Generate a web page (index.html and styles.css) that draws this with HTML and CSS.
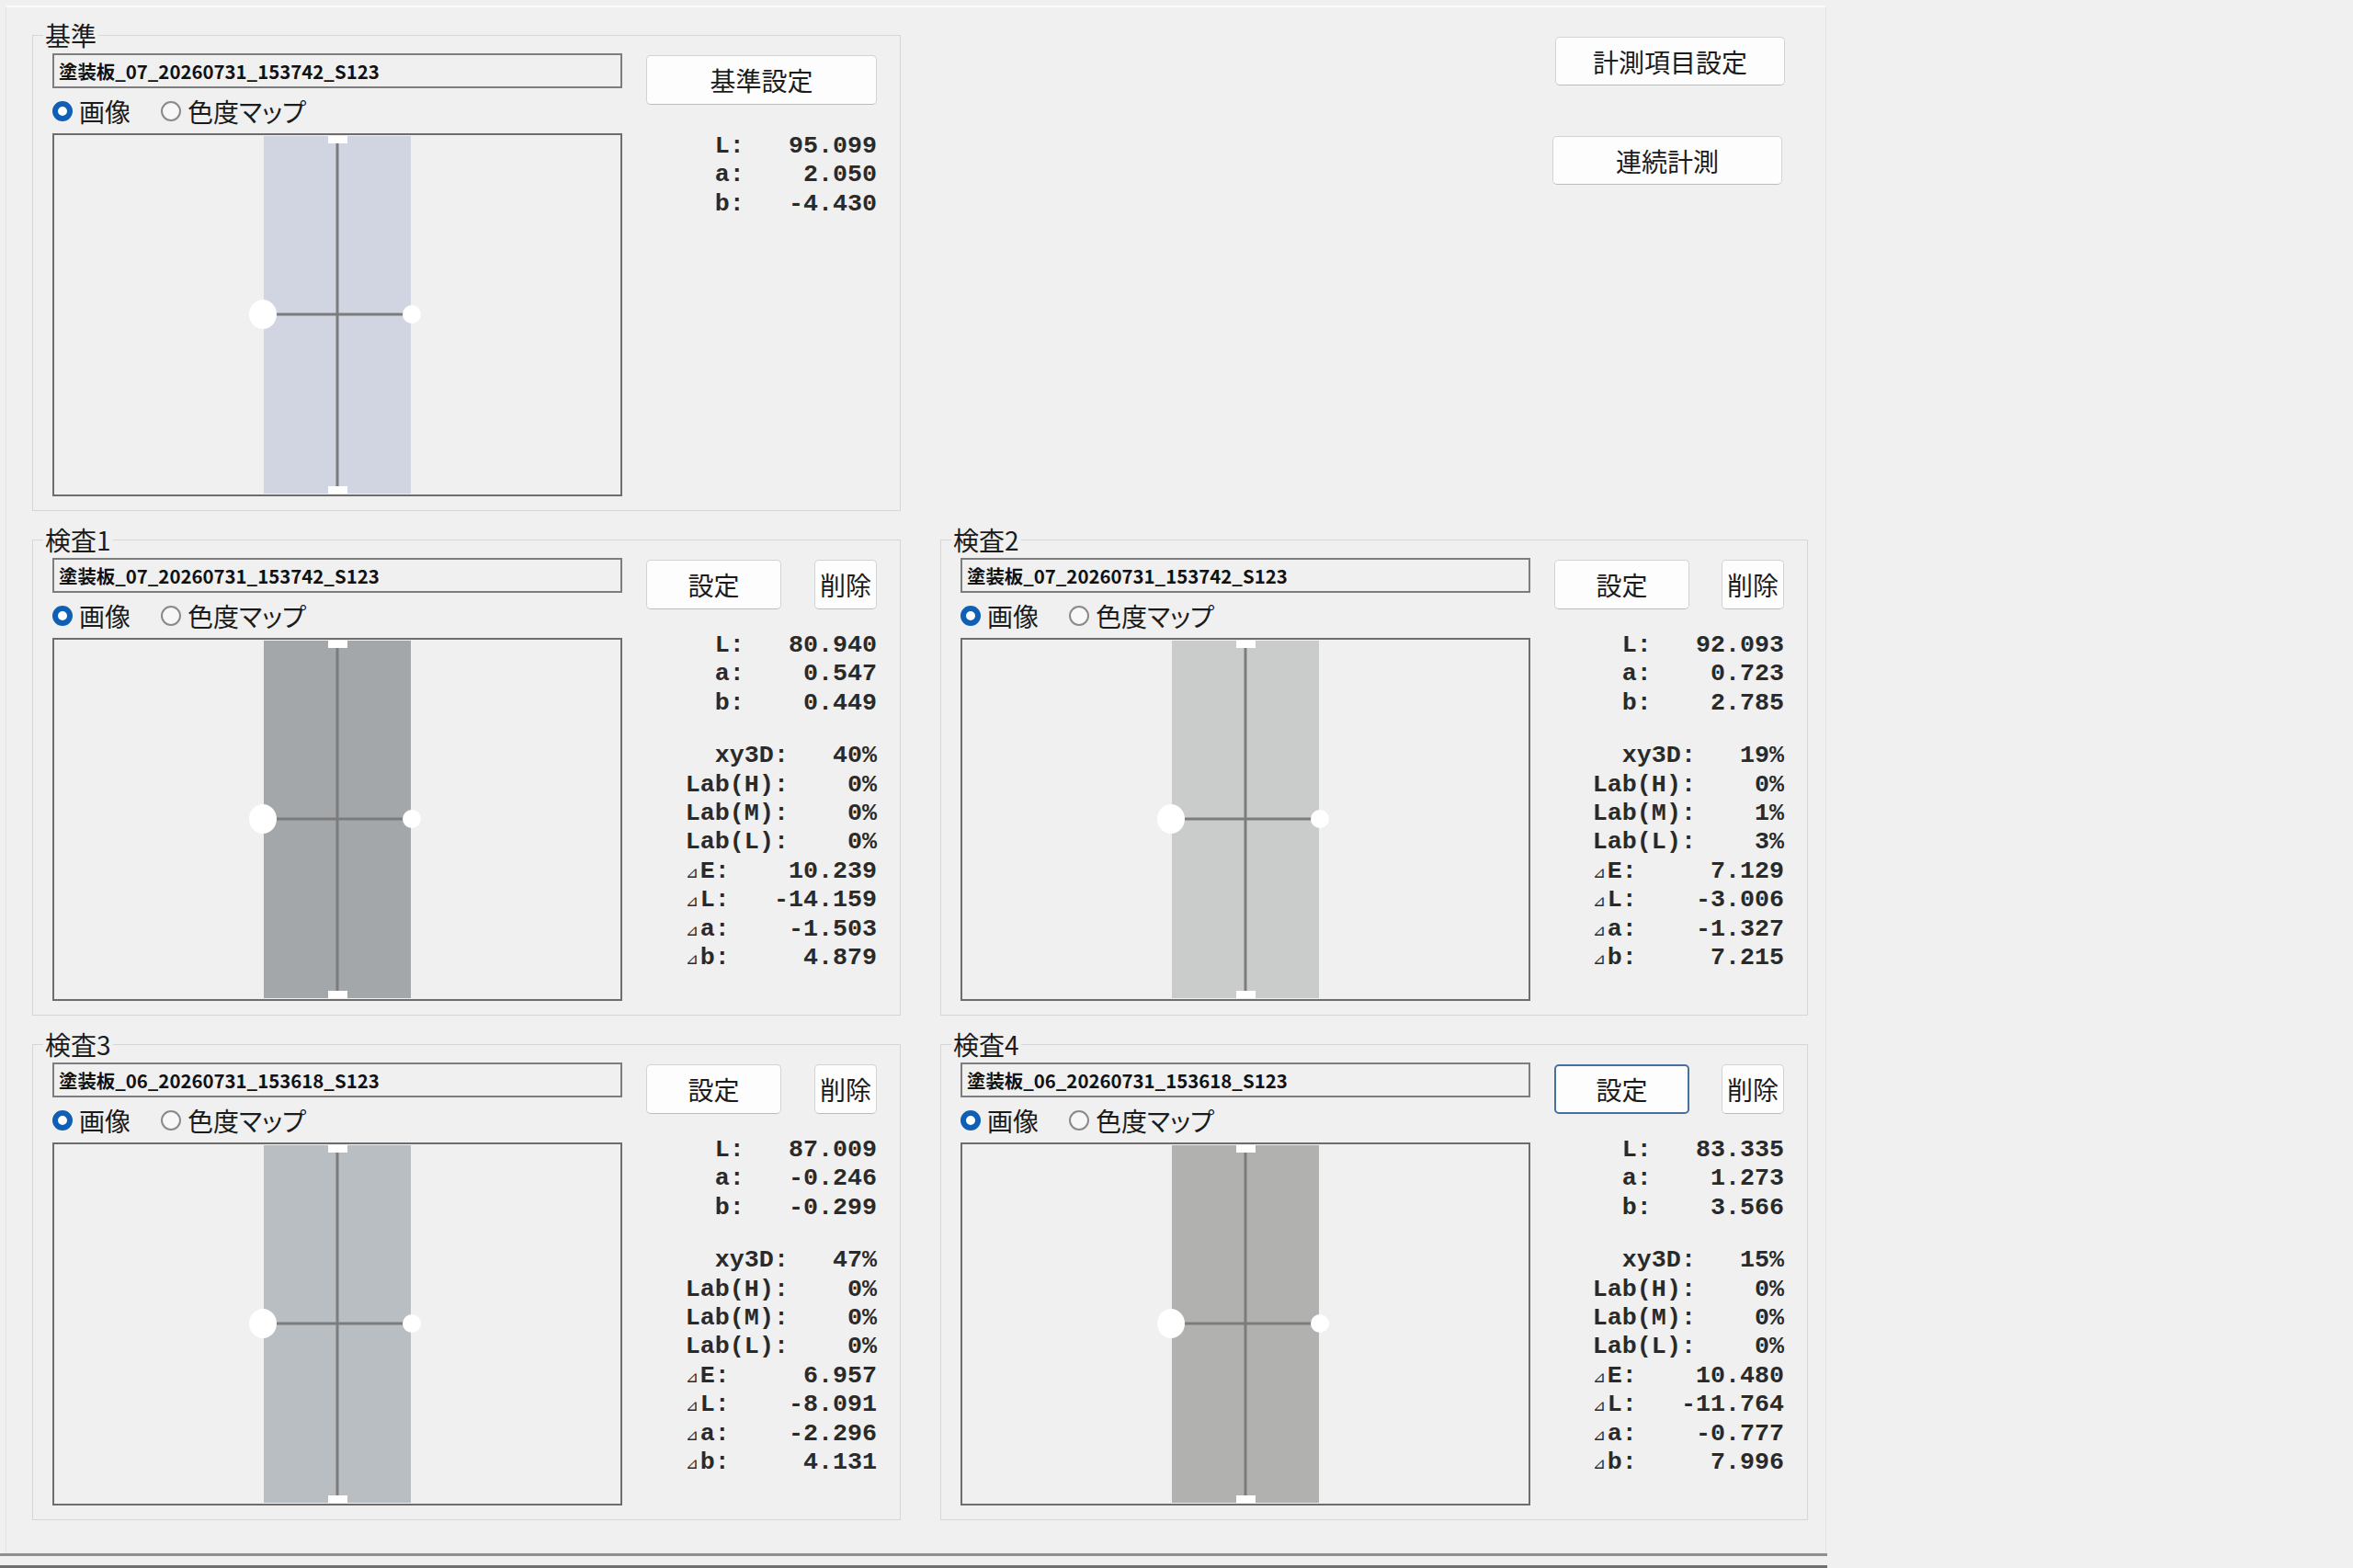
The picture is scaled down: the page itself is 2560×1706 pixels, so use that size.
FILE: index.html
```html
<!DOCTYPE html>
<html lang="ja">
<head>
    <meta charset="UTF-8">
    <title>色差計測</title>
    <link rel="stylesheet" href="styles.css">
</head>
<body>
<div class="window">
    <div class="panel">

        <!-- 基準 -->
        <fieldset class="group base">
            <legend>基準</legend>
            <div class="body">
                <div class="view">
                    <div class="file">塗装板_07_20260731_153742_S123</div>
                    <div class="radios">
                        <label class="radio"><input type="radio" name="m0" checked><span>画像</span></label>
                        <label class="radio"><input type="radio" name="m0"><span>色度マップ</span></label>
                    </div>
                    <div class="preview">
                        <svg viewBox="0 0 616 391">
                            <rect x="228" y="1" width="160" height="389" fill="#d1d5e2"/>
                            <line class="cross" x1="308" y1="1" x2="308" y2="390"/>
                            <line class="cross" x1="240" y1="195" x2="380" y2="195"/>
                            <rect class="grip" x="298" y="1" width="21" height="8"/>
                            <rect class="grip" x="298" y="382" width="21" height="8"/>
                            <ellipse class="grip" cx="227" cy="195" rx="15" ry="16"/>
                            <circle class="grip" cx="389" cy="195" r="10"/>
                        </svg>
                    </div>
                </div>
                <div class="side">
                    <div class="btns">
                        <button class="btn wide">基準設定</button>
                    </div>
                    <div class="vals">
                        <div class="row"><span class="ind">L:</span><span>95.099</span></div>
                        <div class="row"><span class="ind">a:</span><span>2.050</span></div>
                        <div class="row"><span class="ind">b:</span><span>-4.430</span></div>
                    </div>
                </div>
            </div>
        </fieldset>

        <div class="actions">
            <button class="btn">計測項目設定</button>
            <button class="btn shift">連続計測</button>
        </div>

        <!-- 検査1 -->
        <fieldset class="group">
            <legend>検査1</legend>
            <div class="body">
                <div class="view">
                    <div class="file">塗装板_07_20260731_153742_S123</div>
                    <div class="radios">
                        <label class="radio"><input type="radio" name="m1" checked><span>画像</span></label>
                        <label class="radio"><input type="radio" name="m1"><span>色度マップ</span></label>
                    </div>
                    <div class="preview">
                        <svg viewBox="0 0 616 391">
                            <rect x="228" y="1" width="160" height="389" fill="#a4a7aa"/>
                            <line class="cross" x1="308" y1="1" x2="308" y2="390"/>
                            <line class="cross" x1="240" y1="195" x2="380" y2="195"/>
                            <rect class="grip" x="298" y="1" width="21" height="8"/>
                            <rect class="grip" x="298" y="382" width="21" height="8"/>
                            <ellipse class="grip" cx="227" cy="195" rx="15" ry="16"/>
                            <circle class="grip" cx="389" cy="195" r="10"/>
                        </svg>
                    </div>
                </div>
                <div class="side">
                    <div class="btns">
                        <button class="btn set">設定</button>
                        <button class="btn del">削除</button>
                    </div>
                    <div class="vals">
                        <div class="row"><span class="ind">L:</span><span>80.940</span></div>
                        <div class="row"><span class="ind">a:</span><span>0.547</span></div>
                        <div class="row"><span class="ind">b:</span><span>0.449</span></div>
                    </div>
                    <div class="vals res">
                        <div class="row"><span class="ind">xy3D:</span><span>40%</span></div>
                        <div class="row"><span>Lab(H):</span><span>0%</span></div>
                        <div class="row"><span>Lab(M):</span><span>0%</span></div>
                        <div class="row"><span>Lab(L):</span><span>0%</span></div>
                        <div class="row"><span><span class="tri">⊿</span>E:</span><span>10.239</span></div>
                        <div class="row"><span><span class="tri">⊿</span>L:</span><span>-14.159</span></div>
                        <div class="row"><span><span class="tri">⊿</span>a:</span><span>-1.503</span></div>
                        <div class="row"><span><span class="tri">⊿</span>b:</span><span>4.879</span></div>
                    </div>
                </div>
            </div>
        </fieldset>

        <!-- 検査2 -->
        <fieldset class="group">
            <legend>検査2</legend>
            <div class="body">
                <div class="view">
                    <div class="file">塗装板_07_20260731_153742_S123</div>
                    <div class="radios">
                        <label class="radio"><input type="radio" name="m2" checked><span>画像</span></label>
                        <label class="radio"><input type="radio" name="m2"><span>色度マップ</span></label>
                    </div>
                    <div class="preview">
                        <svg viewBox="0 0 616 391">
                            <rect x="228" y="1" width="160" height="389" fill="#cacccb"/>
                            <line class="cross" x1="308" y1="1" x2="308" y2="390"/>
                            <line class="cross" x1="240" y1="195" x2="380" y2="195"/>
                            <rect class="grip" x="298" y="1" width="21" height="8"/>
                            <rect class="grip" x="298" y="382" width="21" height="8"/>
                            <ellipse class="grip" cx="227" cy="195" rx="15" ry="16"/>
                            <circle class="grip" cx="389" cy="195" r="10"/>
                        </svg>
                    </div>
                </div>
                <div class="side">
                    <div class="btns">
                        <button class="btn set">設定</button>
                        <button class="btn del">削除</button>
                    </div>
                    <div class="vals">
                        <div class="row"><span class="ind">L:</span><span>92.093</span></div>
                        <div class="row"><span class="ind">a:</span><span>0.723</span></div>
                        <div class="row"><span class="ind">b:</span><span>2.785</span></div>
                    </div>
                    <div class="vals res">
                        <div class="row"><span class="ind">xy3D:</span><span>19%</span></div>
                        <div class="row"><span>Lab(H):</span><span>0%</span></div>
                        <div class="row"><span>Lab(M):</span><span>1%</span></div>
                        <div class="row"><span>Lab(L):</span><span>3%</span></div>
                        <div class="row"><span><span class="tri">⊿</span>E:</span><span>7.129</span></div>
                        <div class="row"><span><span class="tri">⊿</span>L:</span><span>-3.006</span></div>
                        <div class="row"><span><span class="tri">⊿</span>a:</span><span>-1.327</span></div>
                        <div class="row"><span><span class="tri">⊿</span>b:</span><span>7.215</span></div>
                    </div>
                </div>
            </div>
        </fieldset>

        <!-- 検査3 -->
        <fieldset class="group">
            <legend>検査3</legend>
            <div class="body">
                <div class="view">
                    <div class="file">塗装板_06_20260731_153618_S123</div>
                    <div class="radios">
                        <label class="radio"><input type="radio" name="m3" checked><span>画像</span></label>
                        <label class="radio"><input type="radio" name="m3"><span>色度マップ</span></label>
                    </div>
                    <div class="preview">
                        <svg viewBox="0 0 616 391">
                            <rect x="228" y="1" width="160" height="389" fill="#b9bec2"/>
                            <line class="cross" x1="308" y1="1" x2="308" y2="390"/>
                            <line class="cross" x1="240" y1="195" x2="380" y2="195"/>
                            <rect class="grip" x="298" y="1" width="21" height="8"/>
                            <rect class="grip" x="298" y="382" width="21" height="8"/>
                            <ellipse class="grip" cx="227" cy="195" rx="15" ry="16"/>
                            <circle class="grip" cx="389" cy="195" r="10"/>
                        </svg>
                    </div>
                </div>
                <div class="side">
                    <div class="btns">
                        <button class="btn set">設定</button>
                        <button class="btn del">削除</button>
                    </div>
                    <div class="vals">
                        <div class="row"><span class="ind">L:</span><span>87.009</span></div>
                        <div class="row"><span class="ind">a:</span><span>-0.246</span></div>
                        <div class="row"><span class="ind">b:</span><span>-0.299</span></div>
                    </div>
                    <div class="vals res">
                        <div class="row"><span class="ind">xy3D:</span><span>47%</span></div>
                        <div class="row"><span>Lab(H):</span><span>0%</span></div>
                        <div class="row"><span>Lab(M):</span><span>0%</span></div>
                        <div class="row"><span>Lab(L):</span><span>0%</span></div>
                        <div class="row"><span><span class="tri">⊿</span>E:</span><span>6.957</span></div>
                        <div class="row"><span><span class="tri">⊿</span>L:</span><span>-8.091</span></div>
                        <div class="row"><span><span class="tri">⊿</span>a:</span><span>-2.296</span></div>
                        <div class="row"><span><span class="tri">⊿</span>b:</span><span>4.131</span></div>
                    </div>
                </div>
            </div>
        </fieldset>

        <!-- 検査4 -->
        <fieldset class="group">
            <legend>検査4</legend>
            <div class="body">
                <div class="view">
                    <div class="file">塗装板_06_20260731_153618_S123</div>
                    <div class="radios">
                        <label class="radio"><input type="radio" name="m4" checked><span>画像</span></label>
                        <label class="radio"><input type="radio" name="m4"><span>色度マップ</span></label>
                    </div>
                    <div class="preview">
                        <svg viewBox="0 0 616 391">
                            <rect x="228" y="1" width="160" height="389" fill="#b1b2b0"/>
                            <line class="cross" x1="308" y1="1" x2="308" y2="390"/>
                            <line class="cross" x1="240" y1="195" x2="380" y2="195"/>
                            <rect class="grip" x="298" y="1" width="21" height="8"/>
                            <rect class="grip" x="298" y="382" width="21" height="8"/>
                            <ellipse class="grip" cx="227" cy="195" rx="15" ry="16"/>
                            <circle class="grip" cx="389" cy="195" r="10"/>
                        </svg>
                    </div>
                </div>
                <div class="side">
                    <div class="btns">
                        <button class="btn set focus">設定</button>
                        <button class="btn del">削除</button>
                    </div>
                    <div class="vals">
                        <div class="row"><span class="ind">L:</span><span>83.335</span></div>
                        <div class="row"><span class="ind">a:</span><span>1.273</span></div>
                        <div class="row"><span class="ind">b:</span><span>3.566</span></div>
                    </div>
                    <div class="vals res">
                        <div class="row"><span class="ind">xy3D:</span><span>15%</span></div>
                        <div class="row"><span>Lab(H):</span><span>0%</span></div>
                        <div class="row"><span>Lab(M):</span><span>0%</span></div>
                        <div class="row"><span>Lab(L):</span><span>0%</span></div>
                        <div class="row"><span><span class="tri">⊿</span>E:</span><span>10.480</span></div>
                        <div class="row"><span><span class="tri">⊿</span>L:</span><span>-11.764</span></div>
                        <div class="row"><span><span class="tri">⊿</span>a:</span><span>-0.777</span></div>
                        <div class="row"><span><span class="tri">⊿</span>b:</span><span>7.996</span></div>
                    </div>
                </div>
            </div>
        </fieldset>

    </div>
    <div class="statusbar"></div>
</div>
</body>
</html>
```

FILE: styles.css
```css
* {
    box-sizing: border-box;
}
body {
    margin: 0;
    background: #f0f0f0;
    font-family: "Noto Sans CJK JP", sans-serif;
    color: #1b1b1b;
}
.window {
    width: 1988px;
    height: 1706px;
    display: flex;
    flex-direction: column;
}
.panel {
    flex: 1;
    margin: 6px 1px 0 6px;
    border-top: 2px solid #fbfbfb;
    border-left: 1px solid #e3e3e3;
    border-right: 1px solid #e3e3e3;
    padding: 15px 0 0 28px;
    display: grid;
    grid-template-columns: 945px 944px;
    column-gap: 43px;
    row-gap: 16px;
    align-content: start;
    align-items: start;
}
.statusbar {
    height: 16px;
    border-top: 3px solid #8f8f8f;
    border-bottom: 3px solid #707070;
}

/* group boxes */
.group {
    margin: 0;
    min-width: 0;
    padding: 5px 25px 15px 21px;
    border: 1px solid #d6d6d6;
}
.group legend {
    padding: 0 2px;
    margin-left: -10px;
    font-size: 28px;
    line-height: 30px;
}
.body {
    display: grid;
    grid-template-columns: 620px 1fr;
    column-gap: 26px;
}

/* left side: file name, mode, picture */
.file {
    height: 38px;
    border: 2px solid #7d7d7d;
    padding: 0 5px;
    display: flex;
    align-items: center;
    font-size: 20.4px;
    font-weight: 700;
    color: #111;
    white-space: nowrap;
    overflow: hidden;
}
.radios {
    height: 49px;
    display: flex;
    align-items: center;
    gap: 33px;
    font-size: 28px;
    font-feature-settings: "palt";
}
.radio {
    display: flex;
    align-items: center;
    gap: 7px;
}
.radio input {
    appearance: none;
    margin: 0;
    width: 22px;
    height: 22px;
    border-radius: 50%;
    border: 2px solid #8a8a8a;
    background: #f7f7f7;
}
.radio input:checked {
    border: 6.5px solid #0f5fb5;
    background: #fff;
}
.preview {
    height: 395px;
    border: 2px solid #6d6d6d;
}
.preview svg {
    display: block;
    width: 616px;
    height: 391px;
}
.cross {
    stroke: #7c7c7c;
    stroke-width: 3;
}
.grip {
    fill: #fff;
}

/* right side: buttons and values */
.side {
    display: flex;
    flex-direction: column;
}
.btns {
    display: flex;
    justify-content: space-between;
    margin-top: 2px;
}
.btn {
    height: 54px;
    padding: 0;
    background: #fdfdfd;
    border: 1px solid #d3d3d3;
    border-bottom-color: #bcbcbc;
    border-radius: 5px;
    font-family: "Noto Sans CJK JP", sans-serif;
    font-size: 28px;
    color: #1b1b1b;
}
.btn.wide {
    width: 100%;
}
.btn.set {
    width: 147px;
}
.btn.del {
    width: 68px;
}
.btn.focus {
    border: 2px solid #46709e;
}
.actions {
    display: flex;
    flex-direction: column;
    align-items: flex-end;
    gap: 55px;
    padding: 17px 25px 0 0;
}
.actions .btn {
    width: 250px;
    height: 53px;
}
.actions .shift {
    margin-right: 3px;
}
.vals {
    align-self: flex-end;
    width: 13ch;
    margin-top: 24px;
    font-family: "Liberation Mono", monospace;
    font-size: 26.7px;
    font-weight: 700;
    line-height: 31.4px;
    color: #2a2a2a;
}
.base .vals {
    margin-top: 30px;
}
.vals.res {
    margin-top: 26px;
}
.row {
    display: flex;
    justify-content: space-between;
    white-space: pre;
}
.ind {
    padding-left: 2ch;
}
.tri {
    display: inline-block;
    width: 16px;
    font-family: "DejaVu Sans", sans-serif;
    font-size: 17px;
    font-weight: 400;
    line-height: 17px;
}
```
